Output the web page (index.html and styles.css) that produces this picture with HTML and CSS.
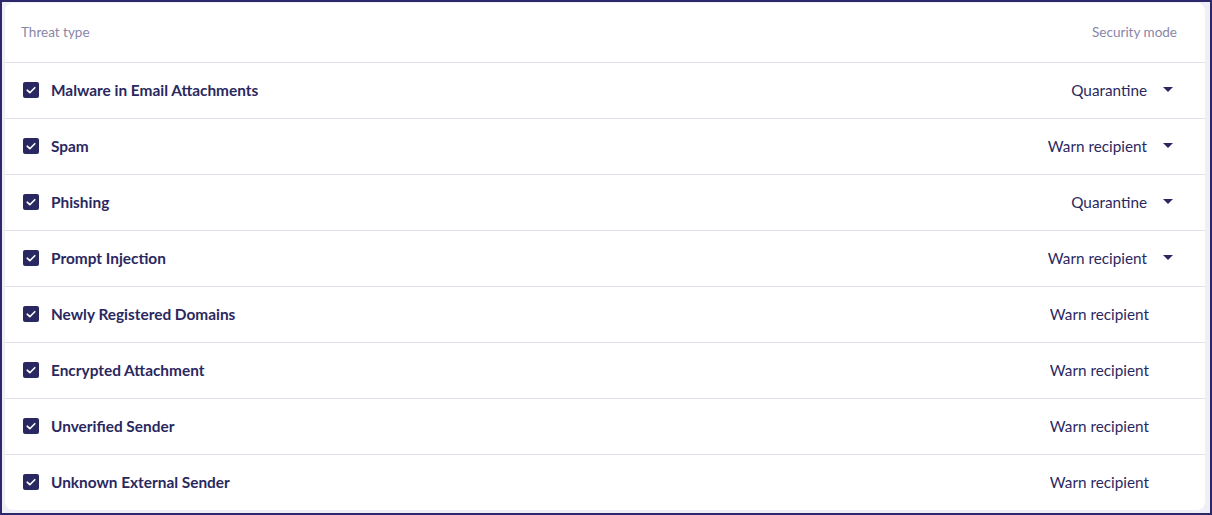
FILE: index.html
```html
<!DOCTYPE html>
<html>
<head>
<meta charset="utf-8">
<link rel="stylesheet" href="styles.css">
</head>
<body>
<div class="frame">
  <div class="card">
    <div class="head">
      <span>Threat type</span>
      <span class="head-mode">Security mode</span>
    </div>
    <div class="row">
      <label class="item"><span class="cb"><svg viewBox="0 0 16 16"><path d="M4.2 8.2l2.6 2.5 5-5" /></svg></span><span class="name">Malware in Email Attachments</span></label>
      <div class="mode select"><span>Quarantine</span><span class="caret"></span></div>
    </div>
    <div class="row">
      <label class="item"><span class="cb"><svg viewBox="0 0 16 16"><path d="M4.2 8.2l2.6 2.5 5-5" /></svg></span><span class="name">Spam</span></label>
      <div class="mode select"><span>Warn recipient</span><span class="caret"></span></div>
    </div>
    <div class="row">
      <label class="item"><span class="cb"><svg viewBox="0 0 16 16"><path d="M4.2 8.2l2.6 2.5 5-5" /></svg></span><span class="name">Phishing</span></label>
      <div class="mode select"><span>Quarantine</span><span class="caret"></span></div>
    </div>
    <div class="row">
      <label class="item"><span class="cb"><svg viewBox="0 0 16 16"><path d="M4.2 8.2l2.6 2.5 5-5" /></svg></span><span class="name">Prompt Injection</span></label>
      <div class="mode select"><span>Warn recipient</span><span class="caret"></span></div>
    </div>
    <div class="row">
      <label class="item"><span class="cb"><svg viewBox="0 0 16 16"><path d="M4.2 8.2l2.6 2.5 5-5" /></svg></span><span class="name">Newly Registered Domains</span></label>
      <div class="mode"><span>Warn recipient</span></div>
    </div>
    <div class="row">
      <label class="item"><span class="cb"><svg viewBox="0 0 16 16"><path d="M4.2 8.2l2.6 2.5 5-5" /></svg></span><span class="name">Encrypted Attachment</span></label>
      <div class="mode"><span>Warn recipient</span></div>
    </div>
    <div class="row">
      <label class="item"><span class="cb"><svg viewBox="0 0 16 16"><path d="M4.2 8.2l2.6 2.5 5-5" /></svg></span><span class="name">Unverified Sender</span></label>
      <div class="mode"><span>Warn recipient</span></div>
    </div>
    <div class="row">
      <label class="item"><span class="cb"><svg viewBox="0 0 16 16"><path d="M4.2 8.2l2.6 2.5 5-5" /></svg></span><span class="name">Unknown External Sender</span></label>
      <div class="mode"><span>Warn recipient</span></div>
    </div>
  </div>
</div>
</body>
</html>
```
FILE: styles.css
```css
html, body {
  margin: 0;
  padding: 0;
}
body {
  font-family: "Lato", "Liberation Sans", sans-serif;
  color: #2a2860;
  background: #f0eff7;
}
.frame {
  box-sizing: border-box;
  width: 1212px;
  height: 515px;
  border: 2px solid #2c2869;
  padding: 1px 5px 3px 3px;
  background: #f0eff7;
  overflow: hidden;
}
.card {
  background: #ffffff;
  border-radius: 8px;
  height: 100%;
  overflow: hidden;
}
.head {
  display: flex;
  align-items: center;
  justify-content: space-between;
  padding: 0 28px 2px 16px;
  font-size: 13.5px;
  color: #8885a8;
  border-bottom: 1px solid #e1e0e8;
  box-sizing: border-box;
  height: 60px;
}
.row {
  height: 56px;
  box-sizing: border-box;
  border-bottom: 1px solid #e1e0e8;
  display: flex;
  align-items: center;
  justify-content: space-between;
  padding: 0 32px 1px 18px;
}
.row:last-child {
  border-bottom: none;
  padding-bottom: 2px;
}
.item {
  display: flex;
  align-items: center;
  gap: 12px;
}
.cb {
  width: 16px;
  height: 16px;
  border-radius: 2px;
  background: #2a2860;
  display: flex;
}
.cb svg {
  width: 16px;
  height: 16px;
  fill: none;
  stroke: #ffffff;
  stroke-width: 1.6;
  stroke-linecap: round;
  stroke-linejoin: round;
}
.name {
  font-size: 15.4px;
  font-weight: 700;
  color: #2a2860;
}
.mode {
  font-size: 15.3px;
  color: #2a2860;
  display: flex;
  align-items: center;
  padding-right: 24px;
}
.mode.select {
  padding-right: 0;
}
.caret {
  margin-left: 16px;
  width: 0;
  height: 0;
  border-left: 5px solid transparent;
  border-right: 5px solid transparent;
  border-top: 5px solid #2a2860;
  margin-top: -2px;
}
```
